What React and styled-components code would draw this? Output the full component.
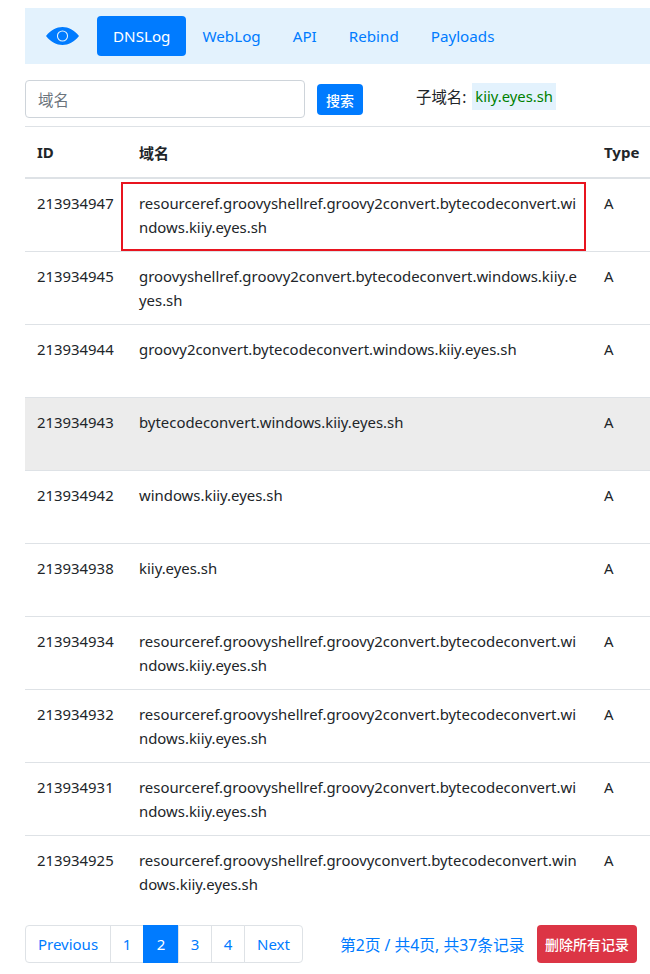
import React from "react";
import styled, { createGlobalStyle } from "styled-components";

const Global = createGlobalStyle`
  html, body { margin: 0; padding: 0; background: #fff; overflow: hidden; }
  body { font-family: "Noto Sans", "Noto Sans CJK SC", sans-serif; color: #212529; font-size: 14.9px; }
`;
const Page = styled.div`
  width: 650px; height: 974px; box-sizing: border-box; padding: 8px 0 0 25px; overflow: hidden;
`;
const Nav = styled.nav`
  height: 56px; background: #e3f2fd; display: flex; align-items: center; padding-left: 21px;
`;
const Logo = styled.svg`
  width: 33px; height: 20px; margin-right: 18px; flex: none;
`;
const NavLink = styled.a`
  height: 40px; display: flex; align-items: center; padding: 0 16px; border-radius: 4px; box-sizing: border-box;
  font-size: 15.2px; color: ${p => (p.$active ? "#fff" : "#007bff")};
  background: ${p => (p.$active ? "#007bff" : "transparent")};
`;
const SearchRow = styled.div`
  height: 63px; display: flex; align-items: flex-start; padding-top: 16px; border-bottom: 1px solid #dee2e6; width: 625px; box-sizing: border-box;
`;
const Input = styled.div`
  width: 280px; height: 38px; box-sizing: border-box; border: 1px solid #ced4da; border-radius: 4px;
  padding-left: 12px; display: flex; align-items: center; color: #6c757d; font-size: 15.5px;
`;
const SearchBtn = styled.button`
  margin: 4px 0 0 12px; width: 46px; height: 31px; border: 0; border-radius: 4px; background: #007bff; color: #fff;
  font: 500 14px "Noto Sans CJK SC", sans-serif; padding: 0;
`;
const Sub = styled.div`
  margin: 3px 0 0 53px; display: flex; align-items: center; font-size: 15.4px; white-space: pre;
`;
const Code = styled.span`
  background: #e3f2fd; color: #008000; padding: 0 3px; margin-left: 6px; width: 84px; box-sizing: border-box;
  height: 27px; line-height: 27px; font-size: 14.8px;
`;
const Table = styled.div`
  width: 625px;
`;
const Row = styled.div`
  display: grid; grid-template-columns: 102px 465px 58px; height: 73px; box-sizing: border-box;
  border-bottom: ${p => (p.$last ? "0" : "1px solid #dee2e6")}; background: ${p => (p.$shade ? "#ececec" : "transparent")};
  position: relative;
`;
const Head = styled(Row)`
  height: 52px; border-bottom: 2px solid #dee2e6; align-items: center; font-weight: 700; font-size: 15px;
`;
const Cell = styled.div`
  padding: 12px 12px 0 12px; line-height: 24px; word-break: break-all; box-sizing: border-box; white-space: ${p => (p.$nowrap ? "nowrap" : "normal")};
`;
const HeadCell = styled.div`
  padding-left: 12px; white-space: nowrap;
`;
const Highlight = styled.div`
  position: absolute; left: 96px; top: 3px; width: 465px; height: 69px; border: 2px solid #e8141f; box-sizing: border-box;
  pointer-events: none;
`;
const Footer = styled.div`
  display: flex; align-items: center; height: 38px; margin-top: 16px; width: 625px;
`;
const Pager = styled.div`
  display: flex; height: 38px; box-sizing: border-box;
`;
const PageItem = styled.a`
  display: flex; align-items: center; justify-content: center; box-sizing: border-box; height: 38px;
  width: ${p => p.$w}px; font-size: 15px; margin-left: -1px;
  border: 1px solid ${p => (p.$active ? "#007bff" : "#dee2e6")};
  color: ${p => (p.$active ? "#fff" : "#007bff")}; background: ${p => (p.$active ? "#007bff" : "#fff")};
  &:first-child { margin-left: 0; border-radius: 4px 0 0 4px; }
  &:last-child { border-radius: 0 4px 4px 0; }
`;
const PageInfo = styled.div`
  margin-left: 37px; color: #007bff; font-size: 15.75px; white-space: nowrap; width: 185px;
`;
const DeleteBtn = styled.button`
  margin-left: 12px; width: 100px; height: 38px; border: 0; border-radius: 4px; background: #dc3545; color: #fff;
  font: 500 14px "Noto Sans CJK SC", sans-serif; padding: 0; white-space: nowrap;
`;

const A = "resourceref.groovyshellref.groovy2convert.bytecodeconvert.windows.kiiy.eyes.sh";
const rows = [
  ["213934947", A, true],
  ["213934945", "groovyshellref.groovy2convert.bytecodeconvert.windows.kiiy.eyes.sh"],
  ["213934944", "groovy2convert.bytecodeconvert.windows.kiiy.eyes.sh"],
  ["213934943", "bytecodeconvert.windows.kiiy.eyes.sh", false, true],
  ["213934942", "windows.kiiy.eyes.sh"],
  ["213934938", "kiiy.eyes.sh"],
  ["213934934", A],
  ["213934932", A],
  ["213934931", A],
  ["213934925", "resourceref.groovyshellref.groovyconvert.bytecodeconvert.windows.kiiy.eyes.sh"],
];
const pages = [["Previous", 86], ["1", 34], ["2", 36], ["3", 34], ["4", 34], ["Next", 59]];

export default function App() {
  return (
    <Page>
      <Global />
      <Nav>
        <Logo viewBox="0 0 33 20">
          <path fillRule="evenodd" fill="#007bff" d="M0 10C5 3.800 10.500 1 16.500 1S28 3.800 33 10C28 16.200 22.500 19 16.500 19S5 16.200 0 10ZM16.500 4.400a5.600 5.600 0 1 0 0 11.200a5.600 5.600 0 0 0 0-11.200ZM16.500 5.500a4.500 4.500 0 1 1 0 9a4.500 4.500 0 0 1 0-9Z" />
          <circle cx="16.500" cy="10" r="2.100" fill="#007bff" />
        </Logo>
        <NavLink $active>DNSLog</NavLink>
        <NavLink>WebLog</NavLink>
        <NavLink>API</NavLink>
        <NavLink>Rebind</NavLink>
        <NavLink>Payloads</NavLink>
      </Nav>
      <SearchRow>
        <Input>域名</Input>
        <SearchBtn>搜索</SearchBtn>
        <Sub>子域名:<Code>kiiy.eyes.sh</Code></Sub>
      </SearchRow>
      <Table>
        <Head>
          <HeadCell>ID</HeadCell>
          <HeadCell>域名</HeadCell>
          <HeadCell>Type</HeadCell>
        </Head>
        {rows.map(([id, domain, hl, shade], i) => (
          <Row key={id} $shade={shade} $last={i === rows.length - 1}>
            <Cell $nowrap>{id}</Cell>
            <Cell>{domain}</Cell>
            <Cell>A</Cell>
            {hl && <Highlight />}
          </Row>
        ))}
      </Table>
      <Footer>
        <Pager>
          {pages.map(([t, w]) => (
            <PageItem key={t} $w={w} $active={t === "2"}>{t}</PageItem>
          ))}
        </Pager>
        <PageInfo>第2页 / 共4页, 共37条记录</PageInfo>
        <DeleteBtn>删除所有记录</DeleteBtn>
      </Footer>
    </Page>
  );
}
